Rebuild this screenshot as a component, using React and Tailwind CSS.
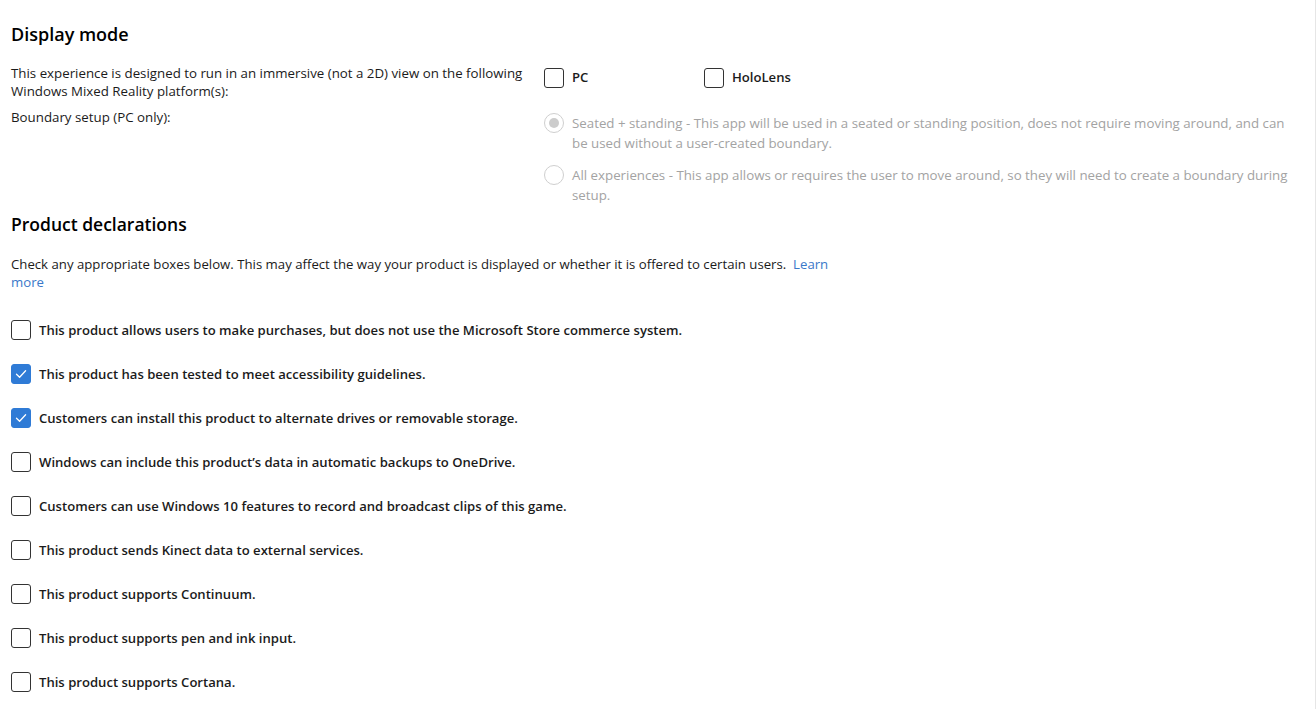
import React, { useState } from "react";

const font = { fontFamily: '"Open Sans", "Noto Sans", Arial, sans-serif' };

const declarations = [
    { id: "purchases", label: "This product allows users to make purchases, but does not use the Microsoft Store commerce system.", checked: false },
    { id: "accessibility", label: "This product has been tested to meet accessibility guidelines.", checked: true },
    { id: "alternate", label: "Customers can install this product to alternate drives or removable storage.", checked: true },
    { id: "backup", label: "Windows can include this product\u2019s data in automatic backups to OneDrive.", checked: false },
    { id: "gamedvr", label: "Customers can use Windows 10 features to record and broadcast clips of this game.", checked: false },
    { id: "kinect", label: "This product sends Kinect data to external services.", checked: false },
    { id: "continuum", label: "This product supports Continuum.", checked: false },
    { id: "pen", label: "This product supports pen and ink input.", checked: false },
    { id: "cortana", label: "This product supports Cortana.", checked: false },
];

const CheckBox = ({ checked, onClick }) => (
    <button
        type="button"
        onClick={onClick}
        className={`w-5 h-5 shrink-0 rounded-[3px] flex items-center justify-center ${checked ? "bg-[#2f7bd6] border border-[#2f7bd6]" : "bg-white border border-[#333333]"}`}
    >
        {checked && (
            <svg width="14" height="14" viewBox="0 0 14 14" fill="none">
                <path d="M2.5 7.3 L5.6 10.2 L11.6 3.8" stroke="white" strokeWidth="1.3" strokeLinecap="round" strokeLinejoin="round" />
            </svg>
        )}
    </button>
);

const Radio = ({ selected }) => (
    <span className="w-5 h-5 shrink-0 rounded-full border border-[#cfcfcf] bg-white flex items-center justify-center">
        {selected && <span className="w-[10px] h-[10px] rounded-full bg-[#cccccc]" />}
    </span>
);

export default function App() {
    const [platforms, setPlatforms] = useState({ pc: false, hololens: false });
    const [checks, setChecks] = useState(
        Object.fromEntries(declarations.map(d => [d.id, d.checked]))
    );

    return (
        <div className="w-[1316px] min-h-screen bg-white border-r border-[#e6e6e6] text-[#1b1b1b]" style={font}>
            <div className="pl-[11px] pt-[22px] pb-6">
                {/* Display mode */}
                <h2 className="text-[18px] leading-6 font-semibold text-black">Display mode</h2>

                <div className="mt-[18px] flex">
                    <p className="w-[533px] shrink-0 text-[13.3px] leading-[18px]">
                        This experience is designed to run in an immersive (not a 2D) view on the following<br />
                        Windows Mixed Reality platform(s):
                    </p>
                    <div className="flex items-center h-7">
                        <label className="w-[160px] flex items-center gap-2 cursor-pointer">
                            <CheckBox checked={platforms.pc} onClick={() => setPlatforms({ ...platforms, pc: !platforms.pc })} />
                            <span className="text-[13.1px] font-semibold">PC</span>
                        </label>
                        <label className="flex items-center gap-2 cursor-pointer">
                            <CheckBox checked={platforms.hololens} onClick={() => setPlatforms({ ...platforms, hololens: !platforms.hololens })} />
                            <span className="text-[13.1px] font-semibold">HoloLens</span>
                        </label>
                    </div>
                </div>

                <div className="mt-2 flex">
                    <p className="w-[533px] shrink-0 text-[13.3px] leading-[18px]">Boundary setup (PC only):</p>
                    <div className="mt-[5px] flex flex-col gap-3 text-[13.3px] leading-5 text-[#a3a3a3]">
                        <div className="flex items-start gap-2">
                            <Radio selected />
                            <p className="whitespace-nowrap">
                                Seated + standing - This app will be used in a seated or standing position, does not require moving around, and can<br />
                                be used without a user-created boundary.
                            </p>
                        </div>
                        <div className="flex items-start gap-2">
                            <Radio />
                            <p className="whitespace-nowrap">
                                All experiences - This app allows or requires the user to move around, so they will need to create a boundary during<br />
                                setup.
                            </p>
                        </div>
                    </div>
                </div>

                {/* Product declarations */}
                <h2 className="mt-[7px] text-[17.5px] leading-6 font-semibold text-black">Product declarations</h2>

                <p className="mt-[19px] text-[13.2px] leading-[18px] whitespace-nowrap">
                    Check any appropriate boxes below. This may affect the way your product is displayed or whether it is offered to certain users.&nbsp;&nbsp;<a href="#" className="text-[#3a78c9]">Learn<br />more</a>
                </p>

                <div className="mt-[29px] flex flex-col gap-6">
                    {declarations.map(d => (
                        <label key={d.id} className="flex items-center gap-2 cursor-pointer">
                            <CheckBox checked={checks[d.id]} onClick={() => setChecks({ ...checks, [d.id]: !checks[d.id] })} />
                            <span className="text-[13.1px] leading-5 font-semibold">{d.label}</span>
                        </label>
                    ))}
                </div>
            </div>
        </div>
    );
}
